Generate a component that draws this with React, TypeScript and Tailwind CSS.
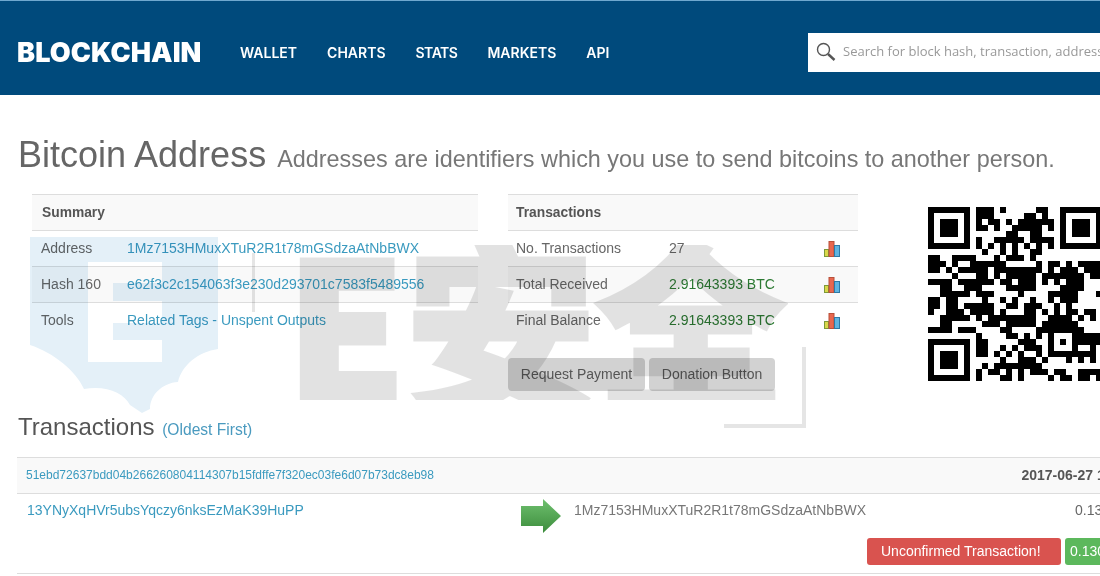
// QR modules per row, finder patterns are added in code
const qrRows = [
  "8-10 12 18-19",
  "8-10 16-17 19",
  "8 10-11 13 15-20",
  "8-9 11 14-18 20",
  "13-14 17-18",
  "8 11-15 17-20",
  "8 10 12 14 16 18 20",
  "9 12 14 17-18",
  "0-1 4-7 11 13-15 17",
  "0-2 4 7-12 18 20-21 23 25-28",
  "0-1 3 5-9 11-18 20 22-24 26-28",
  "4 8-9 11 13-17 19-25 27-28",
  "0-3 5-9 10 12-13 15-17 19 21 23-25",
  "2-3 6-7 8 13-17 22-25",
  "2-6 8-10 15 20-24 28",
  "0-1 3-4 9 12 14 17 20 22-24",
  "0-1 3-4 6-10 13-14 16-18 21 23",
  "0 3-5 7-10 12 16-17 19 21 23-24 26-27",
  "2-6 8 10-17 20-23 25 27",
  "2-3 9-11 13-17 19-24",
  "0-3 5-7 12-13 18-25",
  "8 13-14 16 18 20 24-28",
  "8-9 15-17 20 22 24-28",
  "8-9 12 14 16-18 20 24 27",
  "8-9 11 13 15 18 20-27",
  "12 15-17 19 23 25 27",
  "9 11-18",
  "8 10-11 13 15 17-19 21-22 25-28",
  "8 12-13 15 20 22-23 25-26 28",
];

function Finder({ x, y }: { x: number; y: number }) {
  return (
    <g>
      <rect x={x} y={y} width={7} height={7} fill="#000" />
      <rect x={x + 1} y={y + 1} width={5} height={5} fill="#fff" />
      <rect x={x + 2} y={y + 2} width={3} height={3} fill="#000" />
    </g>
  );
}

function QrCode() {
  const cells: { x: number; y: number }[] = [];
  qrRows.forEach((row, y) => {
    row.split(" ").forEach((part) => {
      const [a, b] = part.split("-").map(Number);
      for (let x = a; x <= (b ?? a); x++) cells.push({ x, y });
    });
  });
  return (
    <svg viewBox="0 0 29 29" width={174} height={174} shapeRendering="crispEdges" className="shrink-0">
      {cells.map((c) => (
        <rect key={c.x + "-" + c.y} x={c.x} y={c.y} width={1} height={1} fill="#000" />
      ))}
      {/* alignment pattern */}
      <rect x={20} y={20} width={5} height={5} fill="#000" />
      <rect x={21} y={21} width={3} height={3} fill="#fff" />
      <rect x={22} y={22} width={1} height={1} fill="#000" />
      <Finder x={0} y={0} />
      <Finder x={22} y={0} />
      <Finder x={0} y={22} />
    </svg>
  );
}

function ChartIcon() {
  return (
    <svg width="16" height="16" viewBox="0 0 16 16" className="shrink-0">
      <rect x="0.5" y="8.5" width="4" height="7" fill="#d8d84a" stroke="#7c9a3a" />
      <rect x="5" y="0.5" width="5" height="15" fill="#e8674f" stroke="#b8503a" />
      <rect x="10.5" y="4.5" width="5" height="11" fill="#5fb4e0" stroke="#2f7aa6" />
    </svg>
  );
}

function SearchIcon() {
  return (
    <svg width="20" height="20" viewBox="0 0 20 20" fill="none" stroke="#555" className="ml-2 shrink-0">
      <circle cx="7.5" cy="7.5" r="6" strokeWidth="1.4" />
      <path d="M12 12 L18.5 18" strokeWidth="2.4" />
    </svg>
  );
}

function Row({ striped, children }: { striped?: boolean; children: React.ReactNode }) {
  return (
    <div className={`flex items-center h-9 border-t border-[#ddd] ${striped ? "bg-[#f9f9f9]" : ""}`}>{children}</div>
  );
}

function SummaryRow({ label, striped, children }: { label: string; striped?: boolean; children: React.ReactNode }) {
  return (
    <Row striped={striped}>
      <span className="w-[95px] pl-[9px] text-[#666]">{label}</span>
      <span className="text-[#3a9abf]">{children}</span>
    </Row>
  );
}

function TxRow({ label, striped, green, value }: { label: string; striped?: boolean; green?: boolean; value: string }) {
  return (
    <Row striped={striped}>
      <span className="w-[161px] pl-2 text-[#666]">{label}</span>
      <span className={`w-[155px] ${green ? "text-[#2c7a33]" : "text-[#666]"}`}>{value}</span>
      <ChartIcon />
    </Row>
  );
}

function Watermark() {
  return (
    <div className="absolute inset-0 pointer-events-none overflow-hidden">
      {/* shield mark, the E is a hole in it */}
      <svg width="188" height="180" viewBox="0 0 188 180" className="absolute left-[30px] top-[237px] mix-blend-multiply">
        <path
          fillRule="evenodd"
          d="M0 0 H188 V112 C168 115 152 128 148 145 C132 146 120 158 120 172 L112 176 L100 168 C94 156 76 148 54 152 C46 134 24 116 0 108 Z M58 25 H132 V46 H83 V64 H132 V86 H83 V103 H132 V125 H58 Z"
          fill="#e4f0f8"
        />
      </svg>
      <div className="absolute left-[252px] top-[253px] h-[59px] w-[3px] bg-black/10" />
      <div
        className="absolute left-[286px] top-[245px] h-[155px] w-[524px] overflow-hidden text-[190px] leading-[150px] font-black whitespace-nowrap text-black opacity-[0.11] [-webkit-text-stroke:5px_#000]"
        style={{ fontFamily: '"Noto Sans CJK SC", "Liberation Sans", sans-serif' }}
      >
        E安全
      </div>
      {/* corner bracket */}
      <div className="absolute left-[724px] top-[347px] h-[81px] w-[82px] border-r-[4px] border-b-[4px] border-black/10 [clip-path:polygon(100%_0,100%_100%,0_100%,0_90%,90%_90%,90%_0)]" />
    </div>
  );
}

export default function App() {
  return (
    <div className="relative w-[1100px] h-[576px] overflow-hidden bg-white text-[14px] font-['Liberation_Sans',Arial,sans-serif]">
      <header className="flex items-center h-[95px] pt-[8px] bg-[#004a7c] border-t border-[#6fa8cf] text-white">
        <div className="ml-[17px] w-[223px] text-[27px] leading-none font-black tracking-[0.1px] font-['Inter',sans-serif]">BLOCKCHAIN</div>
        <nav className="flex gap-[30px] text-[14px] font-semibold font-['Inter',sans-serif]">
          <span>WALLET</span>
          <span>CHARTS</span>
          <span className="tracking-[-0.5px]">STATS</span>
          <span>MARKETS</span>
          <span>API</span>
        </nav>
        <div className="flex items-center ml-auto w-[292px] h-[39px] bg-white overflow-hidden whitespace-nowrap">
          <SearchIcon />
          <span className="ml-[7px] text-[13px] text-[#999] font-['Open_Sans',sans-serif]">
            Search for block hash, transaction, address
          </span>
        </div>
      </header>

      <main>
        <h1 className="mt-[36px] ml-[18px] h-[63px] text-[36px] leading-[48px] text-[#666] whitespace-nowrap">
          Bitcoin Address <span className="ml-[1px] text-[23.4px] text-[#777]">Addresses are identifiers which you use to send bitcoins to another person.</span>
        </h1>

        <div className="flex">
          <section className="ml-[32px] w-[446px] shrink-0">
            <Row striped><span className="pl-[10px] pt-[1px] text-[13.8px] font-bold text-[#555]">Summary</span></Row>
            <SummaryRow label="Address">1Mz7153HMuxXTuR2R1t78mGSdzaAtNbBWX</SummaryRow>
            <SummaryRow label="Hash 160" striped>e62f3c2c154063f3e230d293701c7583f5489556</SummaryRow>
            <SummaryRow label="Tools">Related Tags - Unspent Outputs</SummaryRow>
          </section>

          <section className="ml-[30px] w-[350px] shrink-0">
            <Row striped><span className="pl-2 pt-[1px] text-[13.8px] font-bold text-[#555]">Transactions</span></Row>
            <TxRow label="No. Transactions" value="27" />
            <TxRow label="Total Received" value="2.91643393 BTC" striped green />
            <TxRow label="Final Balance" value="2.91643393 BTC" green />
            <div className="flex gap-1 mt-[20px]">
              <span className="flex items-center justify-center w-[137px] h-[33px] rounded bg-[#d2d2d2] text-[#555]">Request Payment</span>
              <span className="flex items-center justify-center w-[126px] h-[33px] rounded bg-[#d2d2d2] text-[#555]">Donation Button</span>
            </div>
          </section>

          <div className="ml-[70px] mt-[13px] shrink-0">
            <QrCode />
          </div>
        </div>

        <h2 className="mt-[14px] ml-[18px] h-[52px] text-[24px] leading-[44px] text-[#555] whitespace-nowrap">
          Transactions <span className="ml-[1px] text-[15.6px] text-[#4a9abf]">(Oldest First)</span>
        </h2>

        <div className="ml-[17px] w-[1260px]">
          <div className="flex items-center justify-between h-[37px] px-[9px] bg-[#f9f9f9] border-y border-[#ddd]">
            <span className="mb-[2px] text-[12px] text-[#3a9abf]">51ebd72637bdd04b266260804114307b15fdffe7f320ec03fe6d07b73dc8eb98</span>
            <span className="mr-[115px] font-bold text-[#555]">2017-06-27 13:42:08</span>
          </div>
          <div className="h-[80px] border-b border-[#ddd]">
            <div className="flex pt-[8px]">
              <span className="ml-[10px] w-[494px] leading-4 text-[#3a9abf]">13YNyXqHVr5ubsYqczy6nksEzMaK39HuPP</span>
              <svg width="40" height="34" viewBox="0 0 40 34" className="-mt-[3px] shrink-0">
                <defs>
                  <linearGradient id="arrowFill" x1="0" y1="0" x2="0" y2="1">
                    <stop offset="0" stopColor="#6fc06f" />
                    <stop offset="1" stopColor="#3c8c3c" />
                  </linearGradient>
                </defs>
                <path d="M0 7 H22 V0 L40 17 L22 34 V27 H0 Z" fill="url(#arrowFill)" />
              </svg>
              <span className="ml-[13px] w-[400px] leading-4 text-[#777]">1Mz7153HMuxXTuR2R1t78mGSdzaAtNbBWX</span>
              <span className="ml-[101px] leading-4 text-[#666]">0.13000000 BTC</span>
            </div>
            <div className="flex gap-1 ml-[850px] mt-[5px]">
              <span className="flex items-center pl-[14px] w-[194px] h-[27px] rounded-[3px] bg-[#d9534f] text-white">Unconfirmed Transaction!</span>
              <span className="flex items-center pl-[5px] w-[120px] h-[27px] rounded-[3px] bg-[#5cb85c] text-white">0.13000000 BTC</span>
            </div>
          </div>
        </div>
      </main>

      <Watermark />
    </div>
  );
}
